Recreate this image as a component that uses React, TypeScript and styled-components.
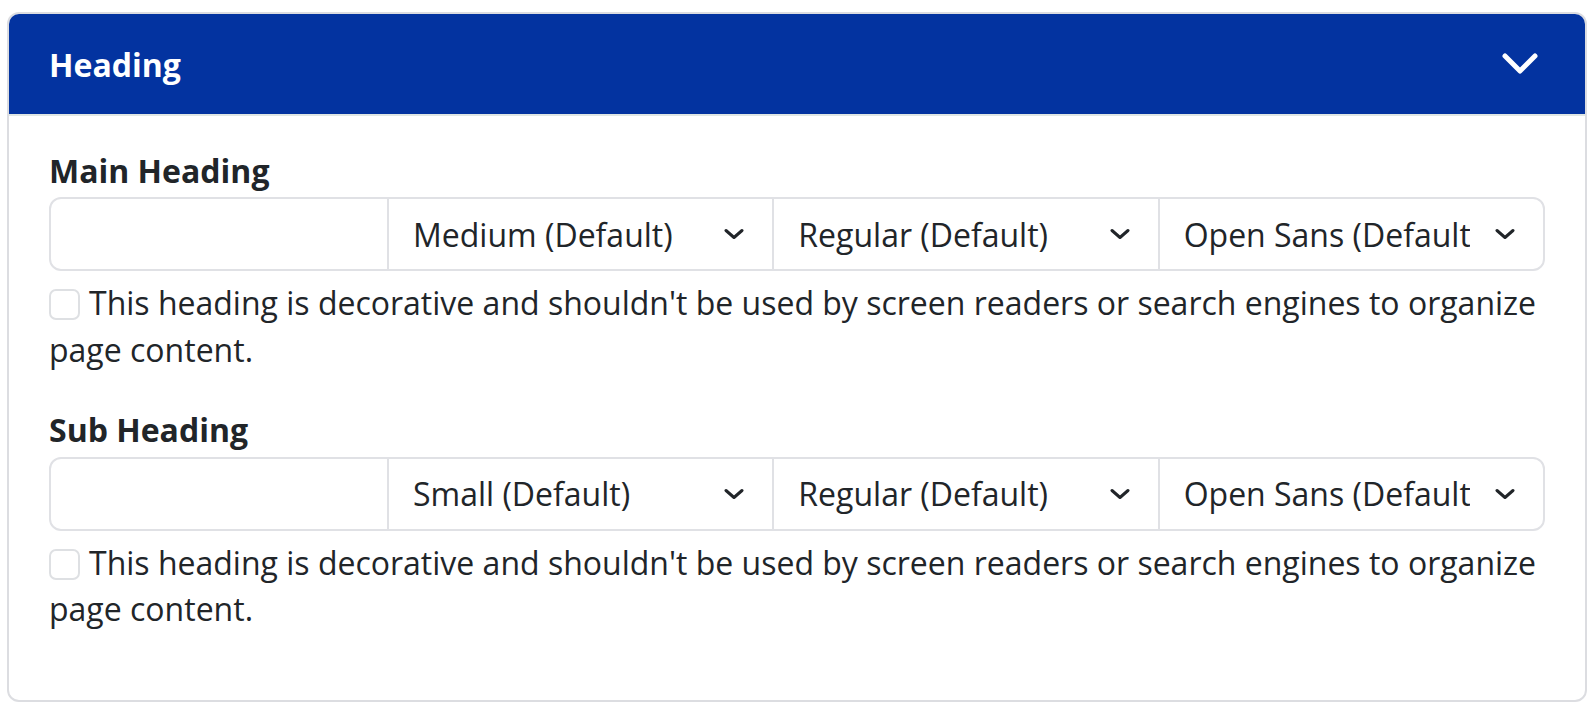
import styled, { createGlobalStyle } from 'styled-components';

const GlobalStyle = createGlobalStyle`
  html, body {
    margin: 0;
    padding: 0;
    background: #ffffff;
  }
  body {
    font-family: 'Open Sans', 'Liberation Sans', sans-serif;
    color: #212529;
  }
`;

const Page = styled.div`
  padding: 12px 9px 10px 7px;
`;

const Card = styled.div`
  border: 2px solid #dcdde1;
  border-radius: 12px;
  overflow: hidden;
  background: #fff;
`;

const Header = styled.div`
  height: 100px;
  background-color: #0333a0;
  border-bottom: 2px solid #dfe6e4;
  display: flex;
  align-items: center;
  justify-content: space-between;
  padding: 0 47px 0 40px;
`;

const Title = styled.h2`
  margin: 0;
  font-size: 32px;
  font-weight: 700;
  color: #fff;
`;

const Body = styled.div`
  padding: 36px 40px 29px;
`;

const Section = styled.div`
  margin-bottom: 38px;
`;

const Label = styled.div`
  font-size: 32px;
  font-weight: 700;
  line-height: 1.2;
  margin-bottom: 7px;
`;

const Group = styled.div`
  display: grid;
  grid-template-columns: 336px 1fr 1fr 1fr;
  height: 74px;
  border: 2px solid #e0e1e5;
  border-radius: 12px;
  box-sizing: border-box;
`;

const TextInput = styled.input`
  border: none;
  outline: none;
  background: transparent;
  font-family: inherit;
  font-size: 32px;
  padding: 0 24px;
  min-width: 0;
`;

const Select = styled.div`
  position: relative;
  display: flex;
  align-items: center;
  border-left: 2px solid #e0e1e5;
  padding: 0 73px 0 24px;
  font-size: 32px;
  color: #212529;
  white-space: nowrap;
  min-width: 0;
`;

const SelectText = styled.span`
  overflow: hidden;
  flex: 1;
`;

const Arrow = styled.svg`
  position: absolute;
  right: 28px;
  top: 50%;
  margin-top: -6px;
`;

const CheckRow = styled.div`
  margin-top: 9px;
  font-size: 32px;
  line-height: 46.5px;
`;

const Box = styled.input`
  appearance: none;
  -webkit-appearance: none;
  width: 31px;
  height: 31px;
  margin: 0 9px 0 0;
  border: 2px solid #dee0e3;
  border-radius: 7px;
  vertical-align: -5px;
  box-sizing: border-box;
`;

const Chevron = () => (
  <Arrow width="20" height="12" viewBox="0 0 20 12" fill="none">
    <polyline
      points="2,2.5 10,9.5 18,2.5"
      stroke="#212529"
      strokeWidth="3"
      strokeLinecap="round"
      strokeLinejoin="round"
    />
  </Arrow>
);

const headings = [
  { label: 'Main Heading', size: 'Medium (Default)' },
  { label: 'Sub Heading', size: 'Small (Default)' },
];

const App = () => {
  return (
    <Page>
      <GlobalStyle />
      <Card>
        <Header>
          <Title>Heading</Title>
          <svg width="36" height="22" viewBox="0 0 36 22" fill="none">
            <polyline
              points="3,3 18,18 33,3"
              stroke="#fff"
              strokeWidth="5"
              strokeLinecap="round"
              strokeLinejoin="round"
            />
          </svg>
        </Header>
        <Body>
          {headings.map((h) => (
            <Section key={h.label}>
              <Label>{h.label}</Label>
              <Group>
                <TextInput type="text" />
                <Select>
                  <SelectText>{h.size}</SelectText>
                  <Chevron />
                </Select>
                <Select>
                  <SelectText>Regular (Default)</SelectText>
                  <Chevron />
                </Select>
                <Select>
                  <SelectText>Open Sans (Default)</SelectText>
                  <Chevron />
                </Select>
              </Group>
              <CheckRow>
                <Box type="checkbox" />
                This heading is decorative and shouldn't be used by screen readers or search engines to organize page content.
              </CheckRow>
            </Section>
          ))}
        </Body>
      </Card>
    </Page>
  );
};

export default App;
